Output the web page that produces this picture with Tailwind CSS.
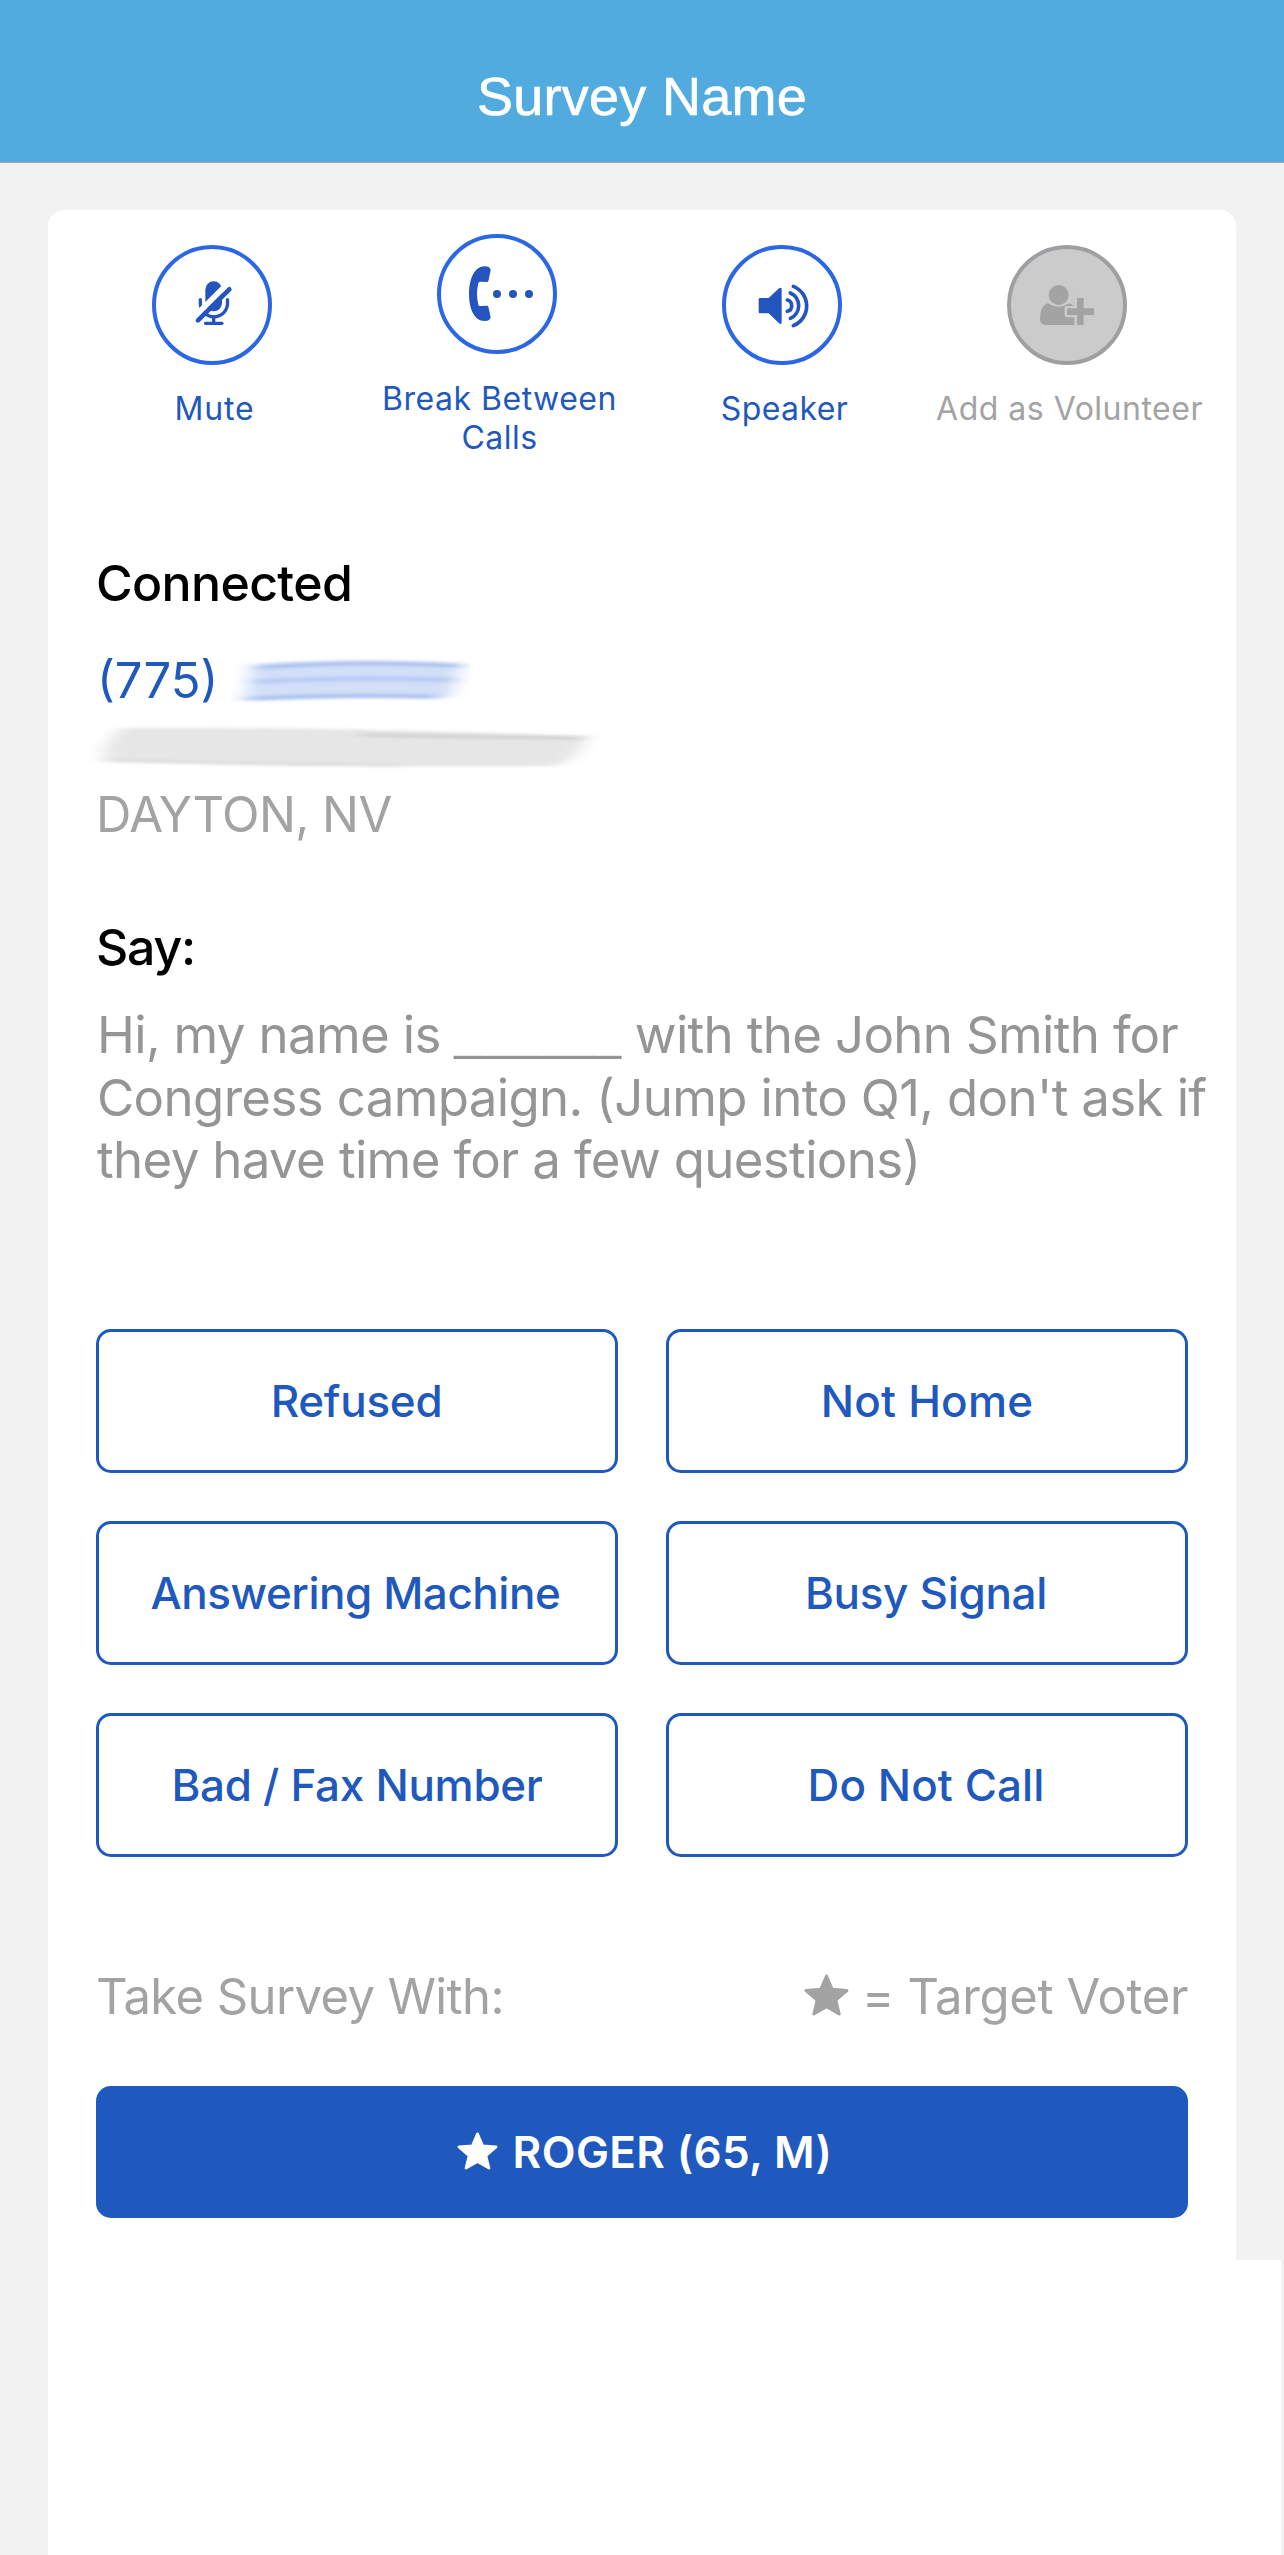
<!DOCTYPE html>
<html lang="en">
  <head>
    <meta charset="UTF-8" />
    <meta name="viewport" content="width=device-width, initial-scale=1.0" />
    <title>Survey Name</title>
    <script src="https://cdn.jsdelivr.net/npm/@tailwindcss/browser@4"></script>
  </head>
  <body class="h-[2555px] overflow-hidden bg-[#f2f2f2] font-['Inter',sans-serif]">
    <!-- header -->
    <header
      class="h-[163px] border-b border-[#a7a7aa] bg-[#51abdf] pt-[66px] text-center"
    >
      <h1
        class="font-['Liberation_Sans',sans-serif] text-[54px] leading-[60px] tracking-[0.27px] text-white [-webkit-text-stroke:0.6px_white]"
      >
        Survey Name
      </h1>
    </header>

    <main class="mt-[47px] ml-12">
      <div class="h-[2050px] w-[1188px] rounded-t-[16px] bg-white">
        <!-- call actions -->
        <div
          class="ml-6 flex h-[343px] text-center text-[32px] leading-[39px] tracking-[0.5px] text-[#1f59bd]"
        >
          <div class="flex w-[285px] flex-col items-center pt-[35px]">
            <div
              class="mr-[5px] size-[120px] rounded-full border-4 border-[#2b66e5]"
            >
              <svg viewBox="78 87 336 336" class="size-full text-[#2454bd]">
                <rect x="226" y="184" width="50" height="90" rx="25" fill="currentColor" />
                <path
                  d="M211 239v11a40.75 40.75 0 0 0 81.5 0v-11"
                  fill="none"
                  stroke="currentColor"
                  stroke-width="10"
                  stroke-linecap="round"
                />
                <path
                  d="M251 290v19M226.500 310h49.500"
                  fill="none"
                  stroke="currentColor"
                  stroke-width="10"
                  stroke-linecap="round"
                />
                <path d="M190 294L292 192" stroke="white" stroke-width="17" />
                <path
                  d="M204 301L298 208"
                  stroke="currentColor"
                  stroke-width="14"
                  stroke-linecap="round"
                />
              </svg>
            </div>
            <span class="mt-6 tracking-[0.9px]">Mute</span>
          </div>

          <div class="flex w-[285px] flex-col items-center pt-6">
            <div
              class="mr-[5px] size-[120px] rounded-full border-4 border-[#2b66e5]"
            >
              <svg viewBox="213 54 336 336" class="size-full text-[#2454bd]" fill="currentColor">
                <path
                  d="M345 139Q358 139 362 149Q362 152 355 183Q354 186 351 186L330 185Q326 185 325 190Q317 222 325 254Q326 259 330 258L351 257Q354 257 355 260L362 292Q360 303 345 303C310 303 297 262 297 222C297 180 312 139 345 139Z"
                />
                <circle cx="381" cy="222" r="12" />
                <circle cx="429" cy="222" r="12" />
                <circle cx="477" cy="222" r="12" />
              </svg>
            </div>
            <span class="mt-[25px]">Break Between Calls</span>
          </div>

          <div class="flex w-[285px] flex-col items-center pt-[35px]">
            <div
              class="mr-[5px] size-[120px] rounded-full border-4 border-[#2b66e5]"
            >
              <svg viewBox="78 87 336 336" class="size-full text-[#2454bd]">
                <path
                  d="M180 234H206L237 205Q245 200 245 208V307Q245 315 237 310L206 280H180Q176 280 176 276V238Q176 234 180 234Z"
                  fill="currentColor"
                />
                <path
                  d="M262 240A17.600 17.600 0 0 1 262 274M271 219A41.400 41.400 0 0 1 271 295M280 199A63.500 63.500 0 0 1 280 317"
                  fill="none"
                  stroke="currentColor"
                  stroke-width="11"
                  stroke-linecap="round"
                />
              </svg>
            </div>
            <span class="mt-6 tracking-[0.4px]">Speaker</span>
          </div>

          <div class="flex w-[285px] flex-col items-center pt-[35px] text-[#a3a3a3]">
            <div
              class="mr-[5px] size-[120px] rounded-full border-4 border-[#9f9fa3] bg-[#cbcbcb]"
            >
              <svg viewBox="273 87 336 336" class="size-full" fill="currentColor">
                <circle cx="416" cy="225" r="30" />
                <path
                  d="M384 250Q415 271 448 250Q464 254 464 275V315H380Q361 315 360 299Q360 256 384 250Z"
                />
                <path
                  d="M471 234h20v31h31v20h-31v30h-20v-30h-30v-20h30z"
                  stroke="#cbcbcb"
                  stroke-width="14"
                  stroke-linejoin="round"
                />
                <path d="M471 234h20v31h31v20h-31v30h-20v-30h-30v-20h30z" />
              </svg>
            </div>
            <span class="mt-6">Add as Volunteer</span>
          </div>
        </div>

        <div class="px-12">
          <!-- contact -->
          <section class="text-[49px] leading-[60px] text-[#a3a3a3]">
            <h2 class="text-[50px] font-medium tracking-[-0.65px] text-black">
              Connected
            </h2>
            <div class="mt-[38px] flex">
              <span class="pl-px text-[#1f59bd]">(775)</span>
              <!-- redacted number -->
              <svg viewBox="230 651 240 60" class="ml-[12px] h-[60px] w-[240px]">
                <defs>
                  <filter id="smear" x="-10%" y="-30%" width="120%" height="160%">
                    <feGaussianBlur stdDeviation="9 1.800" />
                  </filter>
                </defs>
                <g filter="url(#smear)" fill="none">
                  <path
                    d="M252 664Q350 657 462 663L450 697Q350 697 244 701Q248 684 252 664Z"
                    fill="#d3dff7"
                  />
                  <path d="M256 668Q350 660 462 666" stroke="#a9c1f0" stroke-width="4" />
                  <path d="M252 682Q350 676 456 680" stroke="#b7cbf4" stroke-width="5" />
                  <path d="M246 699Q340 694 438 697" stroke="#a9c1f0" stroke-width="4" />
                </g>
              </svg>
            </div>
            <!-- redacted name -->
            <svg viewBox="96 711 520 74" class="h-[74px] w-[520px] overflow-visible">
              <g filter="url(#smear)" fill="none">
                <path
                  d="M122 728Q300 726 586 736Q580 758 556 766Q300 768 104 761Q102 742 122 728Z"
                  fill="#e6e6e6"
                />
                <path d="M360 735Q470 737 586 738" stroke="#d3d4d2" stroke-width="4" />
                <path d="M104 760Q220 764 400 765" stroke="#dcdcda" stroke-width="3" />
              </g>
            </svg>
            <p class="tracking-[-0.56px]">DAYTON, NV</p>
          </section>

          <!-- script -->
          <section class="mt-[72px]">
            <h2
              class="text-[50px] leading-[60px] font-medium tracking-[-1.2px] text-black"
            >
              Say:
            </h2>
            <p
              class="mt-[27px] pl-px text-[51px] leading-[62.5px] tracking-[-0.65px] whitespace-nowrap text-[#959595]"
            >
              <span class="tracking-[-0.67px]"
                >Hi, my name is
                <span
                  class="relative -top-[4px] font-['Liberation_Sans',sans-serif] text-[50px] leading-none tracking-normal"
                  >______</span
                >
                with the John Smith for</span
              ><br />
              Congress campaign. (Jump into Q1, don't ask if<br />
              they have time for a few questions)
            </p>
          </section>

          <!-- call results -->
          <div
            class="mt-[137.5px] grid grid-cols-2 gap-12 text-[44px] font-medium tracking-[-0.3px] text-[#1f59bd]"
          >
            <button class="h-36 rounded-[15px] border-3 border-[#1f59bd] pr-px">
              Refused
            </button>
            <button
              class="h-36 rounded-[15px] border-3 border-[#1f59bd] tracking-[0.2px]"
            >
              Not Home
            </button>
            <button
              class="h-36 rounded-[15px] border-3 border-[#1f59bd] pr-[3px] tracking-[-0.45px]"
            >
              Answering Machine
            </button>
            <button class="h-36 rounded-[15px] border-3 border-[#1f59bd] pr-[2px]">
              Busy Signal
            </button>
            <button class="h-36 rounded-[15px] border-3 border-[#1f59bd]">
              Bad / Fax Number
            </button>
            <button
              class="h-36 rounded-[15px] border-3 border-[#1f59bd] pr-[2px] tracking-[0.07px]"
            >
              Do Not Call
            </button>
          </div>

          <!-- voters -->
          <div
            class="mt-[110px] flex justify-between text-[49px] leading-[60px] tracking-[-0.6px] text-[#a3a3a3]"
          >
            <span>Take Survey With:</span>
            <span class="flex items-center gap-[13px] tracking-[-0.36px]">
              <svg viewBox="0 0 45 42" class="-mt-[5px] h-[42px] w-[45px]">
                <path
                  d="M22.500 2L28.200 15.300L43 16.500L31.800 26.200L35.200 40L22.500 32.600L9.800 40L13.200 26.200L2 16.500L16.800 15.300Z"
                  fill="currentColor"
                  stroke="currentColor"
                  stroke-width="3"
                  stroke-linejoin="round"
                />
              </svg>
              = Target Voter
            </span>
          </div>
          <button
            class="mt-[59px] flex h-[132px] w-full items-center justify-center gap-[15px] rounded-[15px] bg-[#1f59bd] pl-[5px] text-[44px] font-semibold tracking-[0.38px] text-white"
          >
            <svg viewBox="0 0 45 42" class="-mt-[2px] h-[38px] w-[41px]">
              <path
                d="M22.500 2L28.200 15.300L43 16.500L31.800 26.200L35.200 40L22.500 32.600L9.800 40L13.200 26.200L2 16.500L16.800 15.300Z"
                fill="currentColor"
                stroke="currentColor"
                stroke-width="3"
                stroke-linejoin="round"
              />
            </svg>
            ROGER (65, M)
          </button>
        </div>
      </div>

      <div class="h-[295px] w-[1233px] bg-white"></div>
    </main>
  </body>
</html>
